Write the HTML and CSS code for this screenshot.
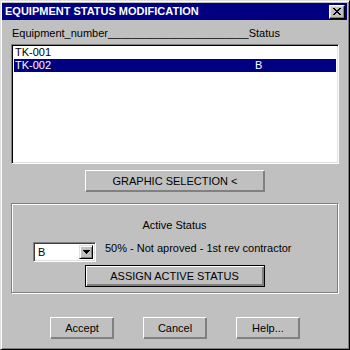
FILE: index.html
```html
<!DOCTYPE html>
<html>
<head>
<meta charset="utf-8">
<link rel="stylesheet" href="styles.css">
</head>
<body>
<div class="window">
  <div class="titlebar">
    <span class="title">EQUIPMENT STATUS MODIFICATION</span>
    <span class="close">
      <svg width="8" height="7" viewBox="0 0 8 7" shape-rendering="crispEdges">
        <path d="M0 0h2v1h1v1h2v-1h1v-1h2v1h-1v1h-1v1h-1v1h1v1h1v1h1v1h-2v-1h-1v-1h-2v1h-1v1h-2v-1h1v-1h1v-1h1v-1h-1v-1h-1v-1h-1z" fill="#000"/>
      </svg>
    </span>
  </div>
  <div class="content">
    <div class="colhead"><span class="col1">Equipment_number_______________________</span><span>Status</span></div>
    <div class="listbox">
      <div class="row"><span class="c1">TK-001</span><span class="c2"></span></div>
      <div class="row sel"><span class="c1">TK-002</span><span class="c2">B</span></div>
    </div>
    <div class="btn graphic">GRAPHIC SELECTION &lt;</div>
    <div class="group">
      <div class="gtitle">Active Status</div>
      <div class="comborow">
        <div class="combo">
          <span class="comboval">B</span>
          <span class="dropbtn">
            <svg width="7" height="4" viewBox="0 0 7 4" shape-rendering="crispEdges"><path d="M0 0h7l-3.5 4z" fill="#000"/></svg>
          </span>
        </div>
        <span class="desc">50% - Not aproved - 1st rev contractor</span>
      </div>
      <div class="btn default assign">ASSIGN ACTIVE STATUS</div>
    </div>
    <div class="footer">
      <div class="btn small">Accept</div>
      <div class="btn small">Cancel</div>
      <div class="btn small">Help...</div>
    </div>
  </div>
</div>
</body>
</html>
```

FILE: styles.css
```css
html, body {
  margin: 0;
  padding: 0;
  background: #c0c0c0;
}

.window {
  width: 350px;
  height: 350px;
  box-sizing: border-box;
  background: #c0c0c0;
  border: 1px solid;
  border-color: #dfdfdf #000 #000 #dfdfdf;
  box-shadow: inset 1px 1px #fff, inset -1px -1px #808080;
  display: flex;
  flex-direction: column;
  font-family: "Liberation Sans", Arial, sans-serif;
  font-size: 11px;
  color: #000;
}

.titlebar {
  margin: 2px 2px 0 1px;
  height: 17px;
  box-sizing: border-box;
  background: #000080;
  display: flex;
  align-items: center;
  justify-content: space-between;
  padding: 0 2px 0 3px;
}

.title {
  color: #fff;
  font-family: "Liberation Sans", Arial, sans-serif;
  font-weight: bold;
  font-size: 11px;
  line-height: 17px;
  white-space: nowrap;
}

.close {
  width: 16px;
  height: 14px;
  box-sizing: border-box;
  background: #c0c0c0;
  border: 1px solid;
  border-color: #fff #000 #000 #fff;
  box-shadow: inset -1px -1px #808080, inset 1px 1px #dfdfdf;
  display: flex;
  align-items: center;
  justify-content: center;
}

.close svg {
  display: block;
}

.content {
  flex: 1;
  display: flex;
  flex-direction: column;
  padding: 0 10px;
}

.colhead {
  margin-top: 7px;
  line-height: 13px;
  display: flex;
  padding-left: 1px;
  white-space: nowrap;
}

.col1 {
  flex: none;
}

.listbox {
  margin-top: 4px;
  height: 120px;
  box-sizing: border-box;
  background: #fff;
  border: 1px solid;
  border-color: #808080 #fff #fff #808080;
  box-shadow: inset 1px 1px #000, inset -1px -1px #dfdfdf;
  padding: 1px 2px;
}

.row {
  display: flex;
  height: 13px;
  line-height: 13px;
  padding-left: 1px;
  white-space: nowrap;
}

.row.sel {
  background: #000080;
  color: #fff;
}

.c1 {
  width: 240px;
}

.btn {
  box-sizing: border-box;
  height: 22px;
  background: #c0c0c0;
  border: 1px solid;
  border-color: #fff #808080 #808080 #fff;
  box-shadow: inset -1px -1px #808080;
  display: flex;
  align-items: center;
  justify-content: center;
  white-space: nowrap;
}

.btn.default {
  border-color: #000;
  box-shadow: inset 1px 1px #fff, inset -2px -2px #808080;
}

.graphic {
  width: 180px;
  align-self: center;
  margin-top: 6px;
}

.group {
  margin-top: 11px;
  margin-right: 1px;
  height: 90px;
  box-sizing: border-box;
  border: 1px solid #808080;
  box-shadow: 1px 1px 0 #fff, inset 1px 1px 0 #fff;
  display: flex;
  flex-direction: column;
  align-items: center;
  padding-top: 15px;
}

.gtitle {
  line-height: 13px;
}

.comborow {
  align-self: stretch;
  display: flex;
  align-items: flex-start;
  margin-top: 10px;
  padding-left: 21px;
}

.combo {
  width: 63px;
  height: 20px;
  box-sizing: border-box;
  background: #fff;
  border: 1px solid;
  border-color: #808080 #fff #fff #808080;
  box-shadow: inset 1px 1px #404040, inset -1px -1px #dfdfdf;
  display: flex;
  align-items: stretch;
  padding: 2px;
}

.comboval {
  flex: 1;
  line-height: 14px;
  padding-left: 2px;
}

.dropbtn {
  width: 14px;
  box-sizing: border-box;
  background: #c0c0c0;
  border: 1px solid;
  border-color: #dfdfdf #000 #000 #dfdfdf;
  box-shadow: inset 1px 1px #fff, inset -1px -1px #808080;
  display: flex;
  align-items: center;
  justify-content: center;
}

.dropbtn svg {
  display: block;
}

.desc {
  margin-left: 9px;
  line-height: 13px;
  white-space: nowrap;
}

.assign {
  width: 180px;
  margin-top: 3px;
}

.footer {
  margin-top: 24px;
  display: flex;
  justify-content: center;
  gap: 29px;
}

.small {
  width: 64px;
}
```
